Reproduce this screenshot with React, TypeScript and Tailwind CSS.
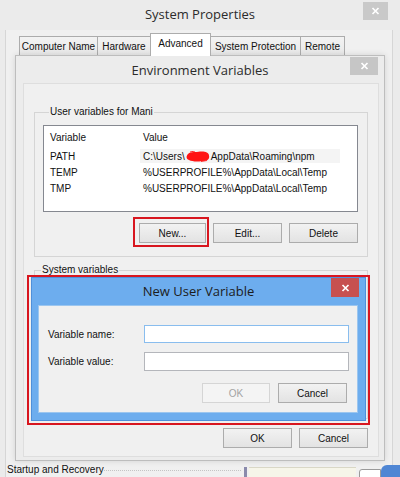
import type { ReactNode } from "react";

// Windows 8 style dialogs: System Properties > Environment Variables > New User Variable

const uiFont = "font-['Liberation_Sans',Arial,sans-serif] text-[10px] text-[#111]";
const titleFont = "font-['Open_Sans','Noto_Sans',sans-serif] text-[13px]";

const tabs = [
  { label: "Computer Name", w: "w-[79px]" },
  { label: "Hardware", w: "w-[54px]" },
  { label: "Advanced", w: "w-[61px]", active: true },
  { label: "System Protection", w: "w-[91px]" },
  { label: "Remote", w: "w-[45px]" },
];

const userVars = [
  { name: "PATH", value: "path" },
  { name: "TEMP", value: "%USERPROFILE%\\AppData\\Local\\Temp" },
  { name: "TMP", value: "%USERPROFILE%\\AppData\\Local\\Temp" },
];

function CloseButton({ className }: { className: string }) {
  return (
    <div className={`absolute flex items-center justify-center ${className}`}>
      <svg width="9" height="8" viewBox="0 0 9 8">
        <path d="M1.5 1 L7.5 7 M7.5 1 L1.5 7" stroke="white" strokeWidth="1.7" />
      </svg>
    </div>
  );
}

function Button({
  children,
  className,
  disabled,
}: {
  children: ReactNode;
  className: string;
  disabled?: boolean;
}) {
  return (
    <div
      className={`flex h-[20px] items-center justify-center border ${
        disabled
          ? "border-[#d5d5d5] bg-[#f4f4f4] text-[#a3a3a3]"
          : "border-[#acacac] bg-gradient-to-b from-[#f2f2f2] to-[#e3e3e3]"
      } ${className}`}
    >
      {children}
    </div>
  );
}

// scribble hiding the account name in the PATH value
function RedScribble() {
  return (
    <svg width="24" height="11" viewBox="0 0 24 11" className="mx-[1px] inline-block align-[-1px]">
      <path
        d="M2 3 C5 0 10 1.5 14 0.5 C18 0 23 1 23 4.5 C24 8 21 10.5 16 10 C11 11 6 10.5 3 9 C0 8 0 5 2 3 Z"
        fill="#ff1414"
      />
      <path d="M4 1 L9 0 M15 10.5 L21 9.5" stroke="#ff3030" strokeWidth="1" />
    </svg>
  );
}

function EnvironmentWindow() {
  return (
    <div className="absolute left-[15px] top-[55px] flex h-[406px] w-[370px] flex-col border border-[#bdbdbd] bg-[#ececec] shadow-[0_0_6px_rgba(0,0,0,0.12)]">
      <div className="relative flex h-[27px] shrink-0 items-center justify-center pt-[2px]">
        <span className={`${titleFont} text-[#2b2b2b]`}>Environment Variables</span>
        <CloseButton className="right-[6px] top-[1px] h-[18px] w-[28px] bg-[#c6c6c6]" />
      </div>

      <div className="ml-[7px] mr-[5px] flex h-[374px] flex-col border border-[#dedede] bg-[#f0f0f0] px-[10px]">
        <fieldset className="mt-[22px] w-[334px] border border-[#d5d5d5] pb-[13px] pl-[8px] pr-[9px]">
          <legend className="ml-[6px] px-[1px] leading-[12px]">User variables for Mani</legend>
          <div className="mt-[7px] h-[87px] w-[315px] border border-[#858890] bg-white">
            <div className="flex h-[22px] items-center">
              <span className="w-[99px] pl-[6px]">Variable</span>
              <span>Value</span>
            </div>
            {userVars.map((v, i) => (
              <div key={v.name} className="flex h-[16px] items-center">
                <span className="w-[99px] pl-[6px]">{v.name}</span>
                {i === 0 ? (
                  <span className="-ml-[3px] flex h-[14px] w-[200px] items-center bg-[#f4f4f4] pl-[3px]">
                    C:\Users\
                    <RedScribble />
                    AppData\Roaming\npm
                  </span>
                ) : (
                  <span>{v.value}</span>
                )}
              </div>
            ))}
          </div>
          <div className="mt-[11px] flex justify-end gap-[8px]">
            <div className="relative">
              <div className="absolute -bottom-[4px] -left-[6px] -right-[3px] -top-[6px] border-2 border-[#d8161f]" />
              <Button className="w-[67px]">New...</Button>
            </div>
            <Button className="-ml-px w-[69px]">Edit...</Button>
            <Button className="-ml-px w-[69px]">Delete</Button>
          </div>
        </fieldset>

        <fieldset className="mt-[7px] h-[155px] w-[334px] border border-[#d5d5d5]">
          <legend className="ml-[6px] px-[1px] leading-[12px]">System variables</legend>
        </fieldset>

        <div className="mt-[9px] flex justify-end gap-[7px]">
          <Button className="w-[69px]">OK</Button>
          <Button className="w-[69px]">Cancel</Button>
        </div>
      </div>
    </div>
  );
}

function NewUserVariableDialog() {
  return (
    <>
      <div className="absolute left-[31px] top-[277px] flex h-[144px] w-[335px] flex-col border border-[#4f90da] bg-[#6dadee]">
        <div className="relative flex h-[27px] shrink-0 items-center justify-center pt-[1px]">
          <span className={`${titleFont} text-[#1c1c1c]`}>New User Variable</span>
          <CloseButton className="right-[6px] top-0 h-[19px] w-[28px] bg-[#c75050]" />
        </div>
        <div className="ml-[6px] mr-[7px] flex h-[108px] flex-col border border-[#9cc6ef] bg-[#f0f0f0] pl-[9px] pr-[8px] pt-[19px]">
          <div className="flex items-center">
            <span className="w-[96px]">Variable name:</span>
            <div className="h-[18px] w-[205px] border border-[#89bdee] bg-white" />
          </div>
          <div className="mt-[9px] flex items-center">
            <span className="w-[96px]">Variable value:</span>
            <div className="h-[19px] w-[205px] border border-[#b4b6bb] bg-white" />
          </div>
          <div className="mt-[12px] flex justify-end gap-[8px] pr-[2px]">
            <Button disabled className="w-[68px]">
              OK
            </Button>
            <Button className="w-[69px]">Cancel</Button>
          </div>
        </div>
      </div>
      <div className="absolute left-[27px] top-[275px] h-[150px] w-[343px] border-2 border-[#d8161f]" />
    </>
  );
}

export default function App() {
  return (
    <div className={`relative h-[477px] w-[400px] overflow-hidden bg-[#ebebeb] ${uiFont}`}>
      {/* System Properties */}
      <div className="flex h-full flex-col">
        <div className="relative flex h-[30px] shrink-0 items-center justify-center">
          <span className={`${titleFont} text-[#2b2b2b]`}>System Properties</span>
          <CloseButton className="right-[12px] top-[2px] h-[18px] w-[25px] bg-[#c9c9c9]" />
        </div>
        <div className="ml-[5px] mr-[7px] flex flex-1 flex-col border-x border-[#d6d6d6] bg-[#f0f0f0]">
          <div className="flex h-[25px] shrink-0 items-end pl-[13px]">
            {tabs.map((t, i) =>
              t.active ? (
                <div
                  key={t.label}
                  className={`relative z-10 -mb-px -ml-px flex h-[23px] items-center justify-center border border-b-0 border-[#acacac] bg-white pb-[3px] ${t.w}`}
                >
                  {t.label}
                </div>
              ) : (
                <div
                  key={t.label}
                  className={`flex h-[19px] items-center justify-center border border-b-0 border-[#acacac] bg-gradient-to-b from-[#f3f3f3] to-[#e8e8e8] ${
                    i === 0 ? "" : "-ml-px"
                  } ${t.w}`}
                >
                  {t.label}
                </div>
              )
            )}
          </div>
          <div className="ml-[9px] h-[405px] w-[370px] shrink-0 border border-[#d9d9d9] bg-white" />
          {/* strip of the window underneath */}
          <div className="flex h-[17px] shrink-0 items-start">
            <span className="ml-[1px] mt-[4px] shrink-0 whitespace-nowrap leading-[12px]">
              Startup and Recovery
            </span>
            <div className="mt-[10px] w-[137px] shrink-0 border-t border-dotted border-[#c4c4c4]" />
            <div className="ml-[3px] mt-[7px] h-[12px] w-[3px] shrink-0 bg-[#8a8aac]" />
            <div className="ml-[2px] mt-[7px] h-[11px] w-[107px] shrink-0 border-t border-[#d9d7c6] bg-[#f6f5e9]" />
            <div className="ml-[3px] mt-[9px] h-[9px] w-[22px] shrink-0 rounded-tl-[3px] border border-[#9a9a9a] bg-white" />
            <div className="-mr-[8px] mt-[5px] h-[12px] w-[20px] shrink-0 rounded-tl-[6px] bg-[#4f86d4]" />
          </div>
        </div>
      </div>

      <EnvironmentWindow />
      <NewUserVariableDialog />
    </div>
  );
}
